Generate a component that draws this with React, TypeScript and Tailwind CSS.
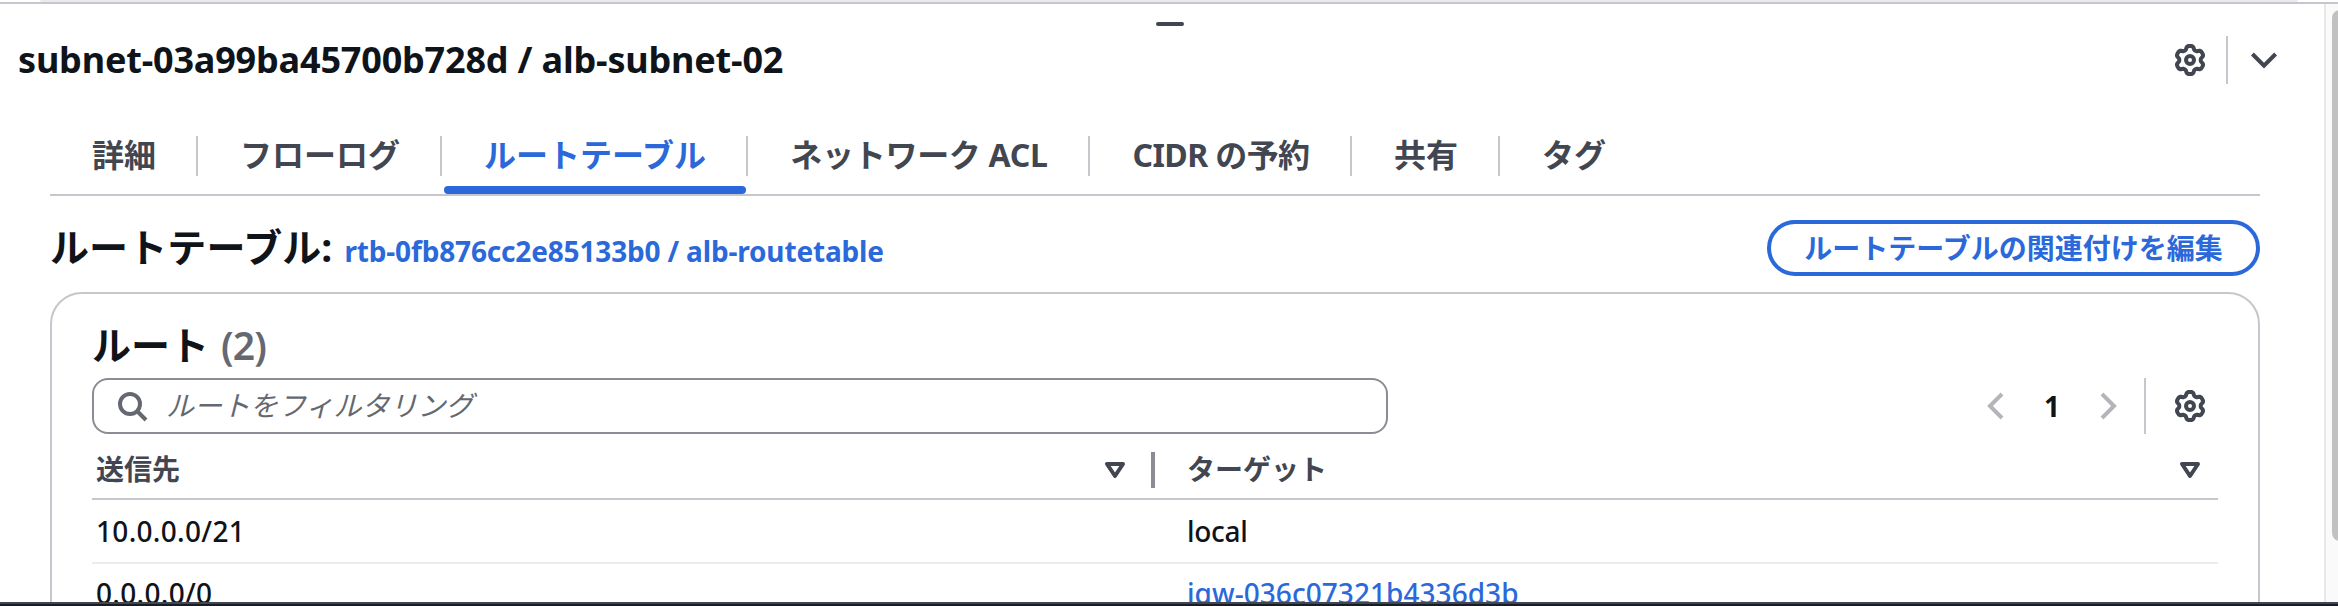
import React from "react";

const jp = "font-['Noto_Sans','Noto_Sans_CJK_JP',sans-serif]";

/* Six-lobed cog outline on a 16-unit grid. */
const gearPath =
  Array.from({ length: 120 }, (_, i) => {
    const a = (i / 120) * Math.PI * 2;
    const r = 6.15 + 0.9 * Math.tanh(1.8 * (Math.cos(6 * a) + 0.25));
    return `${i ? "L" : "M"}${(8 + r * Math.sin(a)).toFixed(2)} ${(8 - r * Math.cos(a)).toFixed(2)}`;
  }).join("") + "Z";

function Gear() {
  return (
    <svg className="size-8 shrink-0" viewBox="0 0 16 16" fill="none" stroke="#424650" strokeWidth="2" strokeLinejoin="round">
      <path d={gearPath} />
      <circle cx="8" cy="8" r="2" />
    </svg>
  );
}

function Chevron({ d, color }: { d: string; color: string }) {
  return (
    <svg className="size-8 shrink-0" viewBox="0 0 16 16" fill="none" stroke={color} strokeWidth="2">
      <path d={d} />
    </svg>
  );
}

function Sort() {
  return (
    <svg className="size-8 shrink-0" viewBox="0 0 16 16" fill="none" stroke="#424650" strokeWidth="2" strokeLinejoin="round">
      <path d="M4 5h8l-4 6z" />
    </svg>
  );
}

const tabs = [
  { label: "詳細", width: "w-[148px]" },
  { label: "フローログ", width: "w-[244px]" },
  { label: "ルートテーブル", width: "w-[306px]", active: true },
  { label: "ネットワーク ACL", width: "w-[342px]" },
  { label: "CIDR の予約", width: "w-[262px]" },
  { label: "共有", width: "w-[148px]" },
  { label: "タグ", width: "w-[146px]" },
];

export default function App() {
  return (
    <div className={`flex h-[606px] w-[2338px] flex-col overflow-hidden bg-white text-[#0f141a] ${jp}`}>
      <div className="h-[2px] shrink-0 px-10"><div className="h-full rounded-b bg-[#ebebed]" /></div>
      <div className="h-[2px] shrink-0 bg-[#c6c6cd]" />
      <div className="flex min-h-0 flex-1">
        <main className="relative flex w-[2324px] flex-col overflow-hidden">
          <div className="absolute left-[1156px] top-[18px] h-1 w-7 rounded-sm bg-[#424650]" />
          <header className="flex h-[112px] shrink-0 items-center pl-[18px] pr-[44px]">
            <h1 className="flex-1 text-[36px] font-bold leading-[48px] tracking-[-0.18px]">subnet-03a99ba45700b728d / alb-subnet-02</h1>
            <Gear />
            <div className="ml-[20px] mr-[20px] h-12 w-[2px] bg-[#c6c6cd]" />
            <Chevron d="M2.200 5L8 10.800 13.800 5" color="#424650" />
          </header>
          <nav className="ml-[50px] flex h-[80px] w-[2210px] shrink-0 border-b-2 border-[#c6c6cd]">
            {tabs.map((t, i) => (
              <div key={t.label} className={`relative flex shrink-0 items-start pt-[20px] ${t.width}`}>
                <div className={`flex h-10 flex-1 items-center justify-center whitespace-nowrap pb-[2px] pl-[2px] text-[32px] font-bold ${i < 6 ? "border-r-2 border-[#c6c6cd]" : ""} ${i === 3 ? "tracking-[-0.3px]" : ""} ${i === 4 ? "tracking-[-0.6px]" : ""} ${t.active ? "text-[#2b69da]" : "text-[#424650]"}`}>
                  {t.label}
                </div>
                {t.active && <div className="absolute bottom-0 left-[2px] right-[2px] h-2 rounded bg-[#2b69da]" />}
              </div>
            ))}
          </nav>
          <section className="ml-[50px] flex w-[2210px] flex-1 flex-col">
            <div className="flex h-[96px] shrink-0 items-center pt-[8px]">
              <h2 className="flex flex-1 items-baseline pt-[2px] text-[39px] font-bold leading-[52px]">
                <span className="tracking-[0.1px]">ルートテーブル:</span>
                <span className="ml-[12px] text-[28px] tracking-[-0.16px] text-[#2b69da]">rtb-0fb876cc2e85133b0 / alb-routetable</span>
              </h2>
              <button className="flex h-[56px] w-[493px] items-center justify-center rounded-full border-4 border-[#2b69da] text-[28px] font-bold text-[#2b69da]">ルートテーブルの関連付けを編集</button>
            </div>
            <div className="flex h-[400px] shrink-0 flex-col rounded-[32px] border-2 border-[#c6c6cd] px-[40px] pt-[26px]">
              <h3 className="flex h-[58px] shrink-0 items-center gap-[12px] pb-[8px] text-[39px] font-bold leading-[50px]">
                <span>ルート</span>
                <span className="text-[39px] font-semibold tracking-[-0.8px] text-[#656871]">(2)</span>
              </h3>
              <div className="flex h-[56px] shrink-0 items-center">
                <div className="flex h-[56px] w-[1296px] items-center rounded-2xl border-2 border-[#8c8c94] pl-[22px]">
                  <svg className="size-8" viewBox="0 0 16 16" fill="none" stroke="#656871" strokeWidth="2"><circle cx="7" cy="7" r="5" /><path d="M15 15l-4.500-4.500" /></svg>
                  <span className="ml-[18px] pb-[2px] text-[28px] italic text-[#656871]">ルートをフィルタリング</span>
                </div>
                <div className="ml-auto flex items-center pr-[12px]">
                  <Chevron d="M11 2L5 8l6 6" color="#b4b4bb" />
                  <span className="w-[80px] text-center text-[28px] font-bold">1</span>
                  <Chevron d="M5 2l6 6-6 6" color="#b4b4bb" />
                  <div className="ml-[20px] mr-[28px] h-14 w-[2px] bg-[#c6c6cd]" />
                  <Gear />
                </div>
              </div>
              <div className="flex h-[66px] shrink-0 items-center border-b-2 border-[#c6c6cd] pt-[8px] text-[28px] font-bold leading-9 text-[#424650]">
                <div className="flex h-9 w-[1063px] items-center justify-between border-r-4 border-[#8c8c94] pl-[4px] pr-[20px]"><span className="pb-[2px]">送信先</span><Sort /></div>
                <div className="flex h-9 flex-1 items-center justify-between pl-[32px] pr-[12px]"><span className="pb-[2px]">ターゲット</span><Sort /></div>
              </div>
              <div className="flex h-[64px] shrink-0 items-center border-b-2 border-[#ebebf0] text-[28px] font-medium">
                <span className="w-[1095px] pl-1 tracking-[0.3px]">10.0.0.0/21</span><span className="tracking-[-0.3px]">local</span>
              </div>
              <div className="flex h-[58px] shrink-0 items-center text-[28px] font-medium">
                <span className="w-[1095px] pl-1 tracking-[0.3px]">0.0.0.0/0</span><span className="tracking-[0.05px] text-[#2b69da]">igw-036c07321b4336d3b</span>
              </div>
            </div>
          </section>
        </main>
        <div className="w-[14px] border-l-2 border-[#e8e8e8] bg-[#fafafa] pl-[6px] pt-[6px]"><div className="h-[531px] w-4 rounded-l-lg bg-[#c1c1c1]" /></div>
      </div>
      <div className="h-[2px] shrink-0 bg-[#424650]" />
      <div className="h-[2px] shrink-0 bg-[#161d26]" />
    </div>
  );
}
